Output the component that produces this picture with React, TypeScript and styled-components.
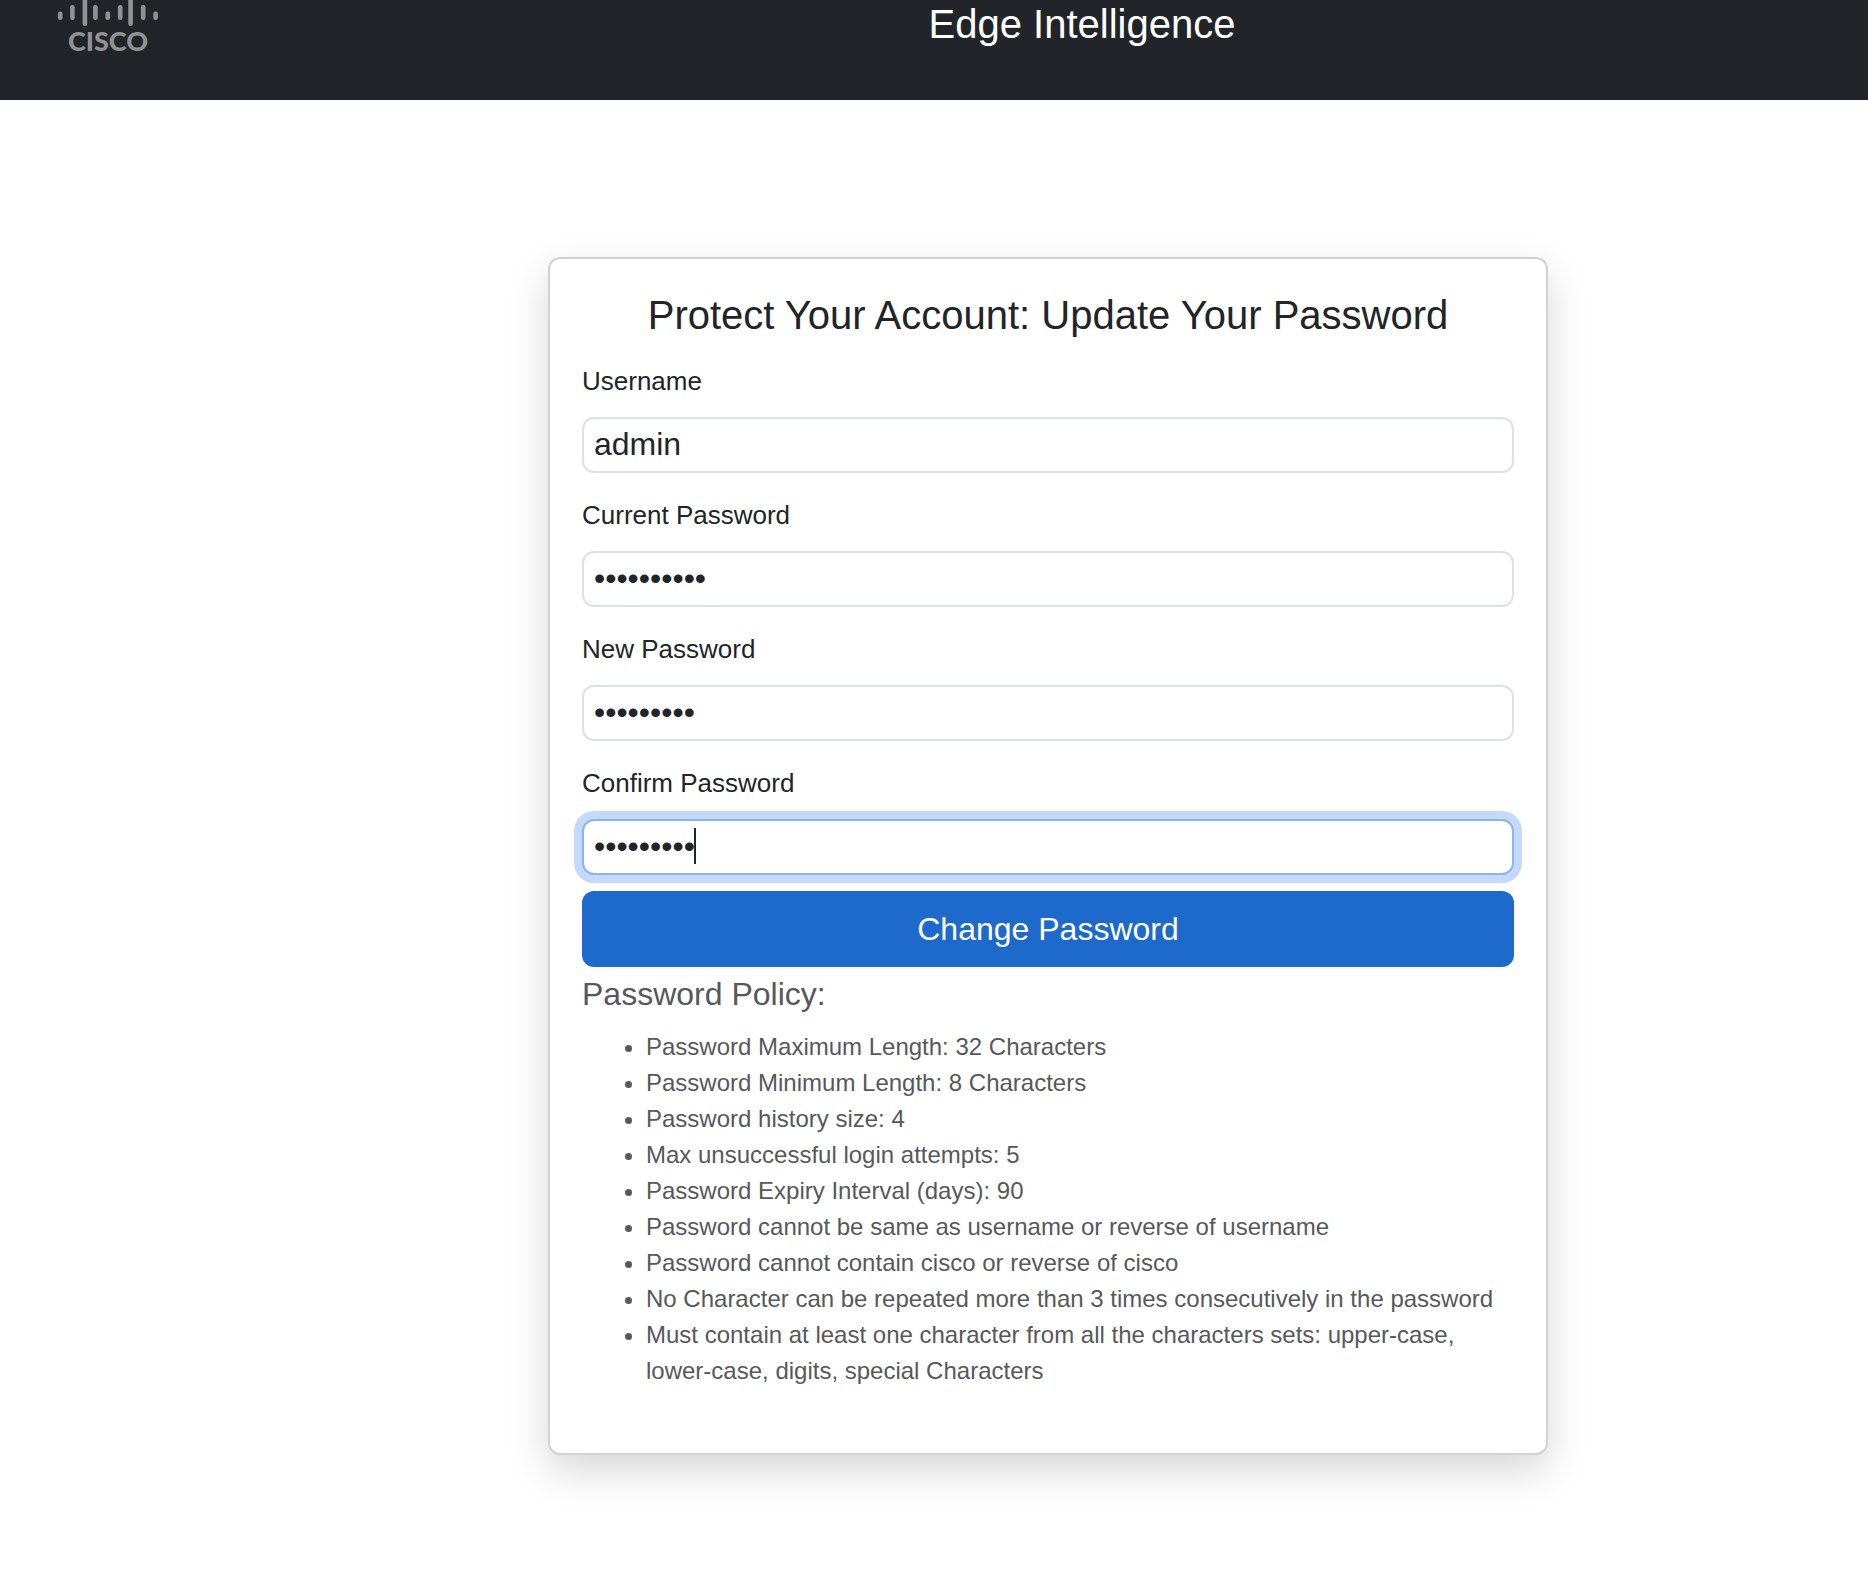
import React, { useId, useState } from "react";
import styled, { createGlobalStyle, css } from "styled-components";

const GlobalStyle = createGlobalStyle`
  *, *::before, *::after { box-sizing: border-box; }
  body {
    margin: 0;
    background: #ffffff;
    color: #212529;
    font-family: "Liberation Sans", Arial, sans-serif;
  }
`;

const Header = styled.header`
  display: flex;
  align-items: flex-start;
  height: 100px;
  background: #212529;
`;

const Brand = styled.div`
  flex: 0 0 296px;
  padding-left: 56px;
`;

const Logo = styled.svg`
  display: block;
  fill: #919294;
`;

const LogoText = styled.text`
  font: 900 27px Lato, sans-serif;
`;

const ProductName = styled.h1`
  flex: 1;
  margin: 0;
  color: #ffffff;
  font-size: 40px;
  font-weight: 400;
  line-height: 48px;
  text-align: center;
`;

const Main = styled.main`
  display: flex;
  justify-content: center;
  padding: 157px 0 112px 228px;
`;

const Card = styled.section`
  width: 100%;
  max-width: 1000px;
  padding: 32px;
  border: 2px solid #d2d2d2;
  border-radius: 12px;
  background: #ffffff;
  box-shadow: 0 16px 40px rgba(0, 0, 0, 0.16);
`;

const CardTitle = styled.h2`
  margin: 0;
  font-size: 40px;
  font-weight: 400;
  line-height: 48px;
  text-align: center;
`;

const Form = styled.form`
  display: flex;
  flex-direction: column;
`;

const FieldGroup = styled.div`
  margin-top: 24px;
`;

const Label = styled.label`
  display: block;
  margin-bottom: 18px;
  font-size: 26px;
  line-height: 36px;
`;

const Control = styled.div`
  position: relative;
`;

const Input = styled.input<{ $active: boolean }>`
  display: block;
  width: 100%;
  height: 56px;
  padding: 0 10px 2px;
  border: 2px solid #dee2e6;
  border-radius: 12px;
  outline: 0;
  background: #ffffff;
  color: #212529;
  font-family: inherit;
  font-size: 32px;
  ${({ $active }) =>
    $active &&
    css`
      border-color: #8eb4e8;
      box-shadow: 0 0 0 8px #c5d9fc;
      caret-color: transparent;
    `}
`;

const Caret = styled.span`
  position: absolute;
  top: 9px;
  left: 112px;
  width: 2px;
  height: 36px;
  background: #212529;
`;

const SubmitButton = styled.button`
  height: 76px;
  margin-top: 16px;
  border: 0;
  border-radius: 12px;
  background: #1e69cc;
  color: #ffffff;
  font-family: inherit;
  font-size: 32px;
  cursor: pointer;
`;

const Policy = styled.section`
  padding-top: 8px;
  color: #58585b;
`;

const PolicyTitle = styled.h3`
  margin: 0 0 16px;
  font-size: 32px;
  font-weight: 400;
  line-height: 38px;
`;

const PolicyList = styled.ul`
  margin: 0 0 32px;
  padding-left: 64px;
  font-size: 24px;
  line-height: 36px;
`;

const logoBars = [
  { x: 4.2, top: 11.5, bottom: 20 },
  { x: 16.4, top: 5, bottom: 20 },
  { x: 28.9, top: -8, bottom: 26 },
  { x: 39.4, top: 5, bottom: 20 },
  { x: 51.8, top: 11.5, bottom: 20 },
  { x: 64.2, top: 5, bottom: 20 },
  { x: 74.6, top: -8, bottom: 26 },
  { x: 87.2, top: 5, bottom: 20 },
  { x: 99.6, top: 11.5, bottom: 20 },
];

const policies = [
  "Password Maximum Length: 32 Characters",
  "Password Minimum Length: 8 Characters",
  "Password history size: 4",
  "Max unsuccessful login attempts: 5",
  "Password Expiry Interval (days): 90",
  "Password cannot be same as username or reverse of username",
  "Password cannot contain cisco or reverse of cisco",
  "No Character can be repeated more than 3 times consecutively in the password",
  "Must contain at least one character from all the characters sets: upper-case, lower-case, digits, special Characters",
];

function CiscoLogo() {
  return (
    <Logo width="104" height="72" viewBox="0 0 104 72" role="img" aria-label="Cisco">
      {logoBars.map((bar) => (
        <rect key={bar.x} x={bar.x - 2.3} y={bar.top} width="4.6" height={bar.bottom - bar.top} rx="2.3" />
      ))}
      <LogoText x="52" y="51" textAnchor="middle">
        CISCO
      </LogoText>
    </Logo>
  );
}

interface FieldProps {
  label: string;
  type?: "text" | "password";
  initial: string;
  active?: boolean;
}

function Field({ label, type = "password", initial, active = false }: FieldProps) {
  const id = useId();
  const [value, setValue] = useState(initial);
  return (
    <FieldGroup>
      <Label htmlFor={id}>{label}</Label>
      <Control>
        <Input
          id={id}
          type={type}
          value={value}
          $active={active}
          onChange={(event) => setValue(event.target.value)}
        />
        {active && <Caret aria-hidden="true" />}
      </Control>
    </FieldGroup>
  );
}

export default function App() {
  return (
    <>
      <GlobalStyle />
      <Header>
        <Brand>
          <CiscoLogo />
        </Brand>
        <ProductName>Edge Intelligence</ProductName>
      </Header>
      <Main>
        <Card>
          <CardTitle>Protect Your Account: Update Your Password</CardTitle>
          <Form onSubmit={(event) => event.preventDefault()}>
            <Field label="Username" type="text" initial="admin" />
            <Field label="Current Password" initial="Admin12345" />
            <Field label="New Password" initial="Edge#2024" />
            <Field label="Confirm Password" initial="Edge#2024" active />
            <SubmitButton type="submit">Change Password</SubmitButton>
          </Form>
          <Policy>
            <PolicyTitle>Password Policy:</PolicyTitle>
            <PolicyList>
              {policies.map((policy) => (
                <li key={policy}>{policy}</li>
              ))}
            </PolicyList>
          </Policy>
        </Card>
      </Main>
    </>
  );
}
